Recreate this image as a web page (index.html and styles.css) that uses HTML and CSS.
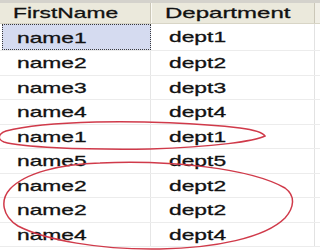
FILE: index.html
```html
<!DOCTYPE html>
<html>
<head>
<meta charset="utf-8">
<link rel="stylesheet" href="styles.css">
</head>
<body>
<div class="view">
  <div class="grid">
    <div class="head">
      <div class="hc c1"><span class="t">FirstName</span></div>
      <div class="hc c2"><span class="t wide">Department</span></div>
      <div class="hc c3"></div>
    </div>
    <div class="row first">
      <div class="cell c1 sel"><span class="t">name1</span></div>
      <div class="cell c2"><span class="t">dept1</span></div>
      <div class="cell c3"></div>
    </div>
    <div class="row"><div class="cell c1"><span class="t">name2</span></div><div class="cell c2"><span class="t">dept2</span></div><div class="cell c3"></div></div>
    <div class="row"><div class="cell c1"><span class="t">name3</span></div><div class="cell c2"><span class="t">dept3</span></div><div class="cell c3"></div></div>
    <div class="row"><div class="cell c1"><span class="t">name4</span></div><div class="cell c2"><span class="t">dept4</span></div><div class="cell c3"></div></div>
    <div class="row"><div class="cell c1"><span class="t">name1</span></div><div class="cell c2"><span class="t">dept1</span></div><div class="cell c3"></div></div>
    <div class="row"><div class="cell c1"><span class="t">name5</span></div><div class="cell c2"><span class="t">dept5</span></div><div class="cell c3"></div></div>
    <div class="row"><div class="cell c1"><span class="t">name2</span></div><div class="cell c2"><span class="t">dept2</span></div><div class="cell c3"></div></div>
    <div class="row"><div class="cell c1"><span class="t">name2</span></div><div class="cell c2"><span class="t">dept2</span></div><div class="cell c3"></div></div>
    <div class="row"><div class="cell c1"><span class="t">name4</span></div><div class="cell c2"><span class="t">dept4</span></div><div class="cell c3"></div></div>
  </div>
  <svg class="marks" width="320" height="250" viewBox="0 0 320 250">
    <path d="M 96 122 C 140 121, 200 123, 240 128 C 255 130, 263 133, 265 136 C 255 141, 215 147, 150 149 C 80 150, 20 147, 4 142 C -3 139, -2 134, 6 131 C 25 126, 60 123, 96 122" />
    <path d="M 100 163 C 170 160, 250 168, 285 188 C 296 196, 294 208, 285 218 C 265 238, 215 248, 160 249 C 100 250, 45 240, 18 226 C 2 216, 0 200, 10 189 C 25 173, 60 164, 100 163" />
  </svg>
</div>
</body>
</html>
```
FILE: styles.css
```css
html, body {
  margin: 0;
  padding: 0;
  background: #ffffff;
}
.view {
  position: relative;
  width: 320px;
  height: 250px;
  overflow: hidden;
}
.grid {
  display: flex;
  flex-direction: column;
  border-top: 3px solid #d4d2cc;
  font-family: "Liberation Sans", Arial, sans-serif;
  font-size: 15px;
  color: #111111;
}
.head, .row {
  display: flex;
}
.head {
  height: 21px;
  background: #ebe9dc;
  border-bottom: 1px solid #d8d5c6;
  box-sizing: border-box;
}
.hc {
  box-sizing: border-box;
  line-height: 20px;
  position: relative;
}
.hc.c1, .hc.c2 {
  border-right: 1px solid #cbc7b8;
  box-shadow: 1px 0 0 #fbfaf5;
}
.hc.c1 { width: 151px; padding-left: 13px; }
.hc.c2 { width: 164px; padding-left: 14px; }
.hc.c3 { flex: 1; background: #f1efe6; }
.row {
  height: 24.5px;
  box-sizing: border-box;
  border-bottom: 1px solid #ececec;
}
.row.first { height: 27px; }
.cell {
  box-sizing: border-box;
  line-height: 23.5px;
}
.row.first .cell { line-height: 26px; }
.cell.c1 { width: 151px; padding-left: 17px; border-right: 1px solid #e6e6e6; }
.cell.c2 { width: 164px; padding-left: 18px; border-right: 1px solid #e2e2e2; }
.cell.c3 { flex: 1; }
.cell.sel {
  background: #d5dbf0;
  border: 1px dotted #3a3a3a;
  margin-left: 2px;
  width: 149px;
  padding-left: 14px;
  line-height: 24px;
}
.t {
  display: inline-block;
  transform: scaleX(1.52);
  transform-origin: left center;
  white-space: nowrap;
  -webkit-text-stroke: 0.3px #111111;
}
.t.wide {
  transform: scaleX(1.6);
}
.marks {
  position: absolute;
  left: 0;
  top: 0;
  pointer-events: none;
}
.marks path {
  fill: none;
  stroke: #d03a4a;
  stroke-width: 1.5;
}
```
